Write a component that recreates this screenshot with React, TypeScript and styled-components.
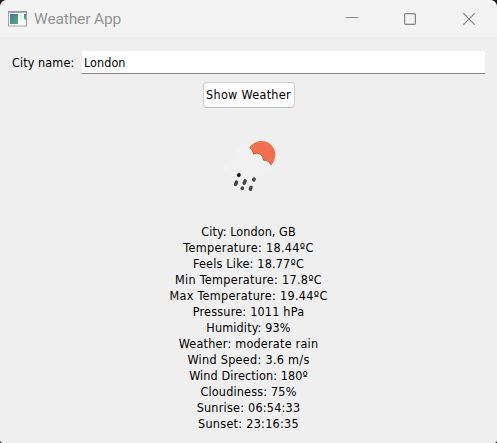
import React from "react";
import styled, { createGlobalStyle } from "styled-components";

const GlobalStyle = createGlobalStyle`
  * { box-sizing: border-box; }
  body { margin: 0; background: #1d1a20; }
`;

const Window = styled.main`
  width: 497px;
  height: 443px;
  display: flex;
  flex-direction: column;
  overflow: hidden;
  border-radius: 7px 7px 3px 3px;
  background: #efefef;
  color: #000;
  font: 12.5px/16px "DejaVu Sans Condensed", "DejaVu Sans", sans-serif;
  font-stretch: condensed;
`;

const TitleBar = styled.header`
  height: 37px;
  flex: none;
  display: flex;
  align-items: center;
  padding-left: 8px;
  background: #f3f3f3;
`;

const Title = styled.h1`
  flex: 1;
  margin: 1px 0 0 7px;
  font: 400 15.5px/20px Roboto, sans-serif;
  letter-spacing: -0.14px;
  color: #949494;
`;

const WindowButton = styled.button`
  width: 58.5px;
  height: 37px;
  padding: 0;
  border: 0;
  display: grid;
  place-items: center;
  background: transparent;
  svg { display: block; }
`;

const Controls = styled.div`
  display: flex;
  margin-right: -1px;
`;

const Form = styled.form`
  display: flex;
  flex-direction: column;
  align-items: center;
  padding: 14px 12px 0;
`;

const Field = styled.label`
  width: 100%;
  display: flex;
  align-items: center;
`;

const FieldName = styled.span`
  width: 70px;
  white-space: nowrap;
  letter-spacing: 0.1px;
`;

const CityInput = styled.input`
  flex: 1;
  min-width: 0;
  height: 23px;
  padding: 1px 2px 0;
  border: 0;
  border-bottom: 1px solid #868686;
  outline: 0;
  background: #fff;
  color: #000;
  font: inherit;
  letter-spacing: 0.05px;
`;

const ShowButton = styled.button`
  width: 92px;
  height: 26px;
  margin-top: 8px;
  padding: 0;
  border: 1px solid #d0d0d0;
  border-bottom-color: #bdbdbd;
  border-radius: 4px;
  background: #fdfdfd;
  color: #000;
  font: inherit;
  letter-spacing: 0.32px;
  white-space: nowrap;
`;

const IconArea = styled.div`
  height: 116px;
  display: grid;
  place-items: center;
`;

const Report = styled.section`
  display: flex;
  flex-direction: column;
  align-items: center;
`;

const Line = styled.p<{ $spacing: number }>`
  margin: 0;
  height: 16px;
  white-space: pre;
  letter-spacing: ${({ $spacing }) => $spacing}px;
`;

const lines: [string, number][] = [
  ["City: London, GB", 0.07],
  ["Temperature: 18.44ºC", 0.33],
  ["Feels Like: 18.77ºC", 0.2],
  ["Min Temperature: 17.8ºC", 0.3],
  ["Max Temperature: 19.44ºC", 0.32],
  ["Pressure: 1011 hPa", 0.21],
  ["Humidity: 93%", 0.15],
  ["Weather: moderate rain", 0.23],
  ["Wind Speed: 3.6 m/s", 0.3],
  ["Wind Direction: 180º", 0.1],
  ["Cloudiness: 75%", 0.18],
  ["Sunrise: 06:54:33", 0.23],
  ["Sunset: 23:16:35", 0.28],
];

const AppIcon = () => (
  <svg width="19" height="16" viewBox="0 0 19 16">
    <defs>
      <linearGradient id="screen" x1="0" y1="0" x2="1" y2="1">
        <stop offset="0" stopColor="#4775a0" />
        <stop offset="1" stopColor="#56ad72" />
      </linearGradient>
      <linearGradient id="strip" x1="0" y1="0" x2="0" y2="1">
        <stop offset="0" stopColor="#397bb0" />
        <stop offset="1" stopColor="#65b878" />
      </linearGradient>
    </defs>
    <rect x=".5" y=".5" width="18" height="14.5" fill="#f8f8f8" stroke="#a1a5a9" />
    <path d="M0 1H19" stroke="#8c9298" strokeWidth="1.5" />
    <rect x="2" y="3" width="8" height="10" fill="url(#screen)" />
    <path d="M12 3h2v7h-2z" fill="#e4eeee" />
    <path d="M16 3h2v6h-1l-1-2z" fill="url(#strip)" />
  </svg>
);

const RainIcon = () => (
  <svg width="100" height="100" viewBox="199 116 100 100">
    <path d="M231 176a8 8 0 0 1 2-16a10 10 0 0 1 20-6q7-2 10 5q7 0 8 7q0 9-8 10z" fill="#f1f1f1" />
    <path d="M249.5 147.5C252 143.5 256.5 141 261.5 141C269 141 275.3 147 275.3 154.5C275.3 158.7 273.8 162.5 271 165.3C270 162.2 267 160.2 263.5 160.3C263 156 260 153.2 256.5 153.4L253.5 154.3C253 151.5 251.5 149 249.5 147.5Z" fill="#ee7050" />
    <path d="M249.8 147.8C251.8 149.5 253 151.5 253.5 154.1L256.5 153.2C260 153 263 156 263.5 160.1C267 160 270 162 271 165" fill="none" stroke="#e9502f" />
    <g stroke="#444" strokeWidth="3.5" strokeLinecap="round">
      <path d="M239.1 174.5l-.4 1M236.6 182l-1 2.4M245.1 180.8l-.9 2.3M254.1 179.1l-.4 .8M242.4 188.1l-.2 .4M251 187.5l-.6 1.6" />
    </g>
    <circle cx="238.8" cy="175" r="1.6" fill="#151515" />
  </svg>
);

export default function App() {
  return (
    <Window>
      <GlobalStyle />
      <TitleBar>
        <AppIcon />
        <Title>Weather App</Title>
        <Controls>
          <WindowButton type="button" aria-label="Minimize">
            <svg width="12" height="12"><path d="M0 4.5H12" stroke="#8b8b8b" /></svg>
          </WindowButton>
          <WindowButton type="button" aria-label="Maximize">
            <svg width="12" height="12"><rect x=".6" y=".6" width="10.8" height="10.8" rx="1" fill="none" stroke="#858585" strokeWidth="1.2" /></svg>
          </WindowButton>
          <WindowButton type="button" aria-label="Close">
            <svg width="12" height="12"><path d="M.3 .3L11.7 11.7M11.7 .3L.3 11.7" stroke="#858585" strokeWidth="1.2" /></svg>
          </WindowButton>
        </Controls>
      </TitleBar>
      <Form onSubmit={(e) => e.preventDefault()}>
        <Field>
          <FieldName>City name:</FieldName>
          <CityInput defaultValue="London" />
        </Field>
        <ShowButton type="submit">Show Weather</ShowButton>
      </Form>
      <IconArea><RainIcon /></IconArea>
      <Report>
        {lines.map(([text, spacing]) => (
          <Line key={text} $spacing={spacing}>{text}</Line>
        ))}
      </Report>
    </Window>
  );
}
